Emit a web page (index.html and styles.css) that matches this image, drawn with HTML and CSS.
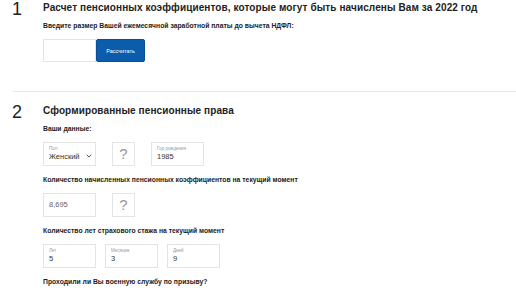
FILE: index.html
```html
<!DOCTYPE html>
<html lang="ru">
<head>
    <meta charset="UTF-8">
    <meta name="viewport" content="width=device-width, initial-scale=1.0">
    <title>Пенсионный калькулятор</title>
    <link rel="stylesheet" href="styles.css">
</head>
<body>
    <div class="calc">
        <!-- Step 1 -->
        <div class="step step-first">
            <div class="step-num">1</div>
            <div class="step-body">
                <h2>Расчет пенсионных коэффициентов, которые могут быть начислены Вам за 2022 год</h2>
                <p class="label">Введите размер Вашей ежемесячной заработной платы до вычета НДФЛ:</p>
                <div class="row">
                    <div class="field salary"></div>
                    <button class="btn">Рассчитать</button>
                </div>
            </div>
        </div>

        <!-- Step 2 -->
        <div class="step step-last">
            <div class="step-num">2</div>
            <div class="step-body">
                <h2>Сформированные пенсионные права</h2>
                <p class="label">Ваши данные:</p>
                <div class="row gap-lg">
                    <div class="field">
                        <span class="hint">Пол</span>
                        <span class="value">Женский</span>
                        <svg class="chevron" width="6" height="4" viewBox="0 0 6 4"><path d="M0.7 0.7 L3 3 L5.3 0.7" fill="none" stroke="#555" stroke-width="1"/></svg>
                    </div>
                    <div class="help">?</div>
                    <div class="field">
                        <span class="hint">Год рождения</span>
                        <span class="value">1985</span>
                    </div>
                </div>

                <p class="label">Количество начисленных пенсионных коэффициентов на текущий момент</p>
                <div class="row gap-lg">
                    <div class="field plain"><span class="value muted">8,695</span></div>
                    <div class="help">?</div>
                </div>

                <p class="label">Количество лет страхового стажа на текущий момент</p>
                <div class="row gap-sm">
                    <div class="field">
                        <span class="hint">Лет</span>
                        <span class="value">5</span>
                    </div>
                    <div class="field">
                        <span class="hint">Месяцев</span>
                        <span class="value">3</span>
                    </div>
                    <div class="field">
                        <span class="hint">Дней</span>
                        <span class="value">9</span>
                    </div>
                </div>

                <p class="label">Проходили ли Вы военную службу по призыву?</p>
            </div>
        </div>
    </div>
</body>
</html>
```

FILE: styles.css
```css
body {
    margin: 0;
    padding: 0;
    background: #fff;
    font-family: "Liberation Sans", Arial, sans-serif;
    color: #222;
}
.calc {
    padding-left: 12px;
}
.step {
    display: flex;
    padding: 12px 0 29px 0;
    border-top: 1px solid #e8e8e8;
}
.step-first {
    border-top: none;
    padding-top: 1px;
}
.step-last {
    padding-bottom: 0;
}
.step-last .label:last-child {
    margin-bottom: 0;
}
.step-num {
    width: 31px;
    font-size: 18px;
    line-height: 14px;
    color: #222;
    padding-top: 1px;
}
.step-body {
    flex: 1;
}
h2 {
    margin: 0;
    font-size: 10px;
    font-weight: bold;
    line-height: 14px;
    letter-spacing: 0.1px;
    color: #222;
}
.label {
    margin: 6px 0 8px 0;
    font-size: 6.8px;
    font-weight: bold;
    line-height: 10px;
    color: #222;
}
.row + .label {
    margin-top: 9px;
}
.row {
    display: flex;
}
.gap-lg {
    gap: 16px;
}
.gap-sm {
    gap: 9px;
}
.field {
    position: relative;
    width: 53px;
    height: 24px;
    box-sizing: border-box;
    border: 1px solid #e4e4e4;
    padding: 3px 5px 0 5px;
}
.field .hint {
    display: block;
    font-size: 4.5px;
    line-height: 6px;
    color: #999;
}
.field .value {
    display: block;
    font-size: 7.5px;
    line-height: 10px;
    color: #333;
}
.field.plain {
    padding-top: 6px;
}
.value.muted {
    color: #666;
}
.chevron {
    position: absolute;
    right: 3px;
    top: 11px;
}
.salary {
    height: 23px;
}
.btn {
    width: 49px;
    height: 23px;
    background: #0b5cab;
    border: 1px solid #0a4e93;
    border-radius: 2px;
    color: #fff;
    font-family: inherit;
    font-size: 5.5px;
    padding: 0;
    cursor: pointer;
}
.help {
    width: 23px;
    height: 24px;
    box-sizing: border-box;
    border: 1px solid #e4e4e4;
    text-align: center;
    font-size: 15px;
    line-height: 22px;
    color: #999;
}
```
